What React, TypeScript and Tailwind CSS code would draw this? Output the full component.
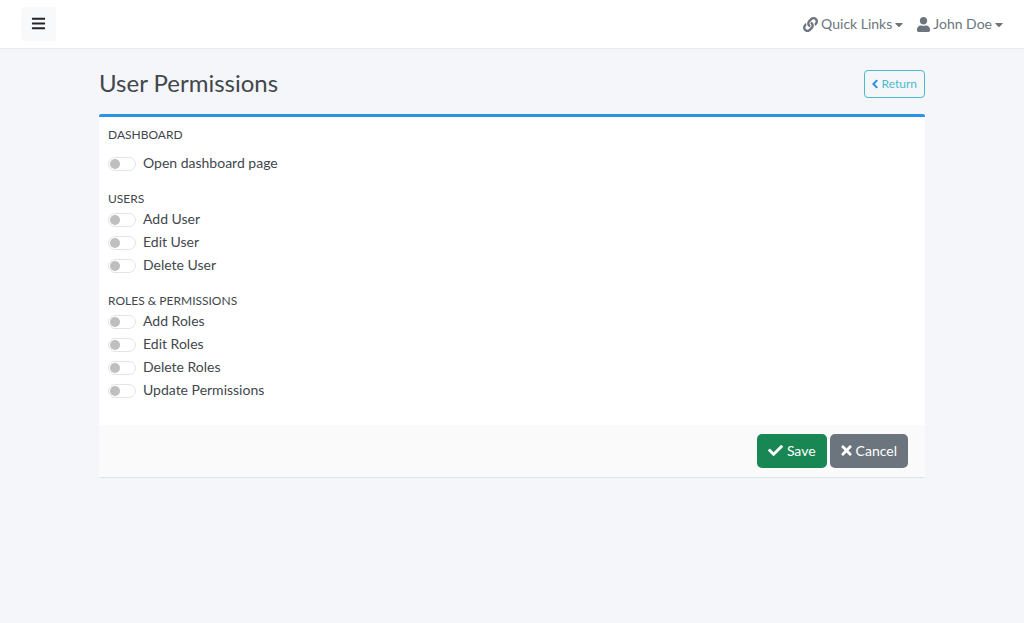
import { useState } from "react";
import { FaBars, FaCaretDown, FaCheck, FaChevronLeft, FaLink, FaTimes, FaUser } from "react-icons/fa";

type Group = { title: string; items: string[]; listClass: string };

const groups: Group[] = [
  { title: "Dashboard", items: ["Open dashboard page"], listClass: "mt-2" },
  { title: "Users", items: ["Add User", "Edit User", "Delete User"], listClass: "" },
  {
    title: "Roles & Permissions",
    items: ["Add Roles", "Edit Roles", "Delete Roles", "Update Permissions"],
    listClass: "",
  },
];

function PermissionSwitch({ label }: { label: string }) {
  const [on, setOn] = useState(false);
  return (
    <label className="flex h-[23px] w-fit cursor-pointer items-center gap-[7px] text-sm leading-[23px]">
      <input
        type="checkbox"
        role="switch"
        checked={on}
        onChange={(e) => setOn(e.target.checked)}
        className="mt-[2px] flex h-[14px] w-7 shrink-0 cursor-pointer appearance-none items-center rounded-full border border-[#e1e5e8] bg-white px-[1px] before:size-[10px] before:rounded-full before:bg-[#bfbfbf] before:content-[''] checked:justify-end checked:border-[#228be6] checked:bg-[#228be6] checked:before:bg-white"
      />
      <span>{label}</span>
    </label>
  );
}

export default function App() {
  return (
    <div className="min-h-screen bg-[#f4f6fa] font-[Lato,sans-serif] text-[#42474c]">
      <header className="flex h-[49px] items-center justify-between border-b border-[#e9ecef] bg-white px-[21px]">
        <button
          type="button"
          aria-label="Toggle menu"
          className="flex h-[34px] w-[35px] items-center justify-center rounded bg-[#f8f9fa] pb-[2px] text-[#212529]"
        >
          <FaBars className="size-[15px]" />
        </button>
        <nav className="flex items-center gap-[14px] text-sm leading-[22px] text-[#6c757d]">
          <button type="button" className="flex items-center gap-[3px]">
            <FaLink className="size-[15px]" />
            <span>Quick Links</span>
            <FaCaretDown className="h-[13px] w-2" />
          </button>
          <button type="button" className="flex items-center gap-[3px]">
            <FaUser className="h-[15px] w-[13px]" />
            <span>John Doe</span>
            <FaCaretDown className="h-[13px] w-2" />
          </button>
        </nav>
      </header>

      <main className="mx-auto max-w-[858px] px-4 pt-[21px]">
        <div className="mb-4 flex items-center justify-between">
          <h1 className="pb-[2px] text-2xl leading-[26px]">User Permissions</h1>
          <a
            href="#"
            className="flex h-7 items-center gap-1 rounded border border-[#4cb9ce] px-[7px] text-xs text-[#4cb9ce]"
          >
            <FaChevronLeft className="h-[10px] w-[6px] text-[#228be6]" stroke="currentColor" strokeWidth="30" />
            Return
          </a>
        </div>

        <form
          onSubmit={(e) => e.preventDefault()}
          className="rounded-xs border-t-3 border-b border-t-[#2a93e2] border-b-[#dfe2e6] bg-white"
        >
          <div className="flex flex-col gap-4 px-[9px] pt-[9px] pb-6">
            {groups.map((group) => (
              <fieldset key={group.title}>
                <legend className="text-xs leading-[17px] uppercase">{group.title}</legend>
                <div className={group.listClass}>
                  {group.items.map((item) => (
                    <PermissionSwitch key={item} label={item} />
                  ))}
                </div>
              </fieldset>
            ))}
          </div>
          <footer className="flex justify-end gap-[3px] bg-[#fafafa] py-[9px] pr-[17px]">
            <button
              type="submit"
              className="flex h-[34px] items-center gap-1 rounded-[5px] bg-[#198754] px-[11px] pb-px text-sm text-white"
            >
              <FaCheck className="size-[15px]" />
              Save
            </button>
            <button
              type="button"
              className="flex h-[34px] items-center gap-1 rounded-[5px] bg-[#6c757d] px-[11px] pb-px text-sm text-white"
            >
              <FaTimes className="h-[15px] w-[11px]" />
              Cancel
            </button>
          </footer>
        </form>
      </main>
    </div>
  );
}
